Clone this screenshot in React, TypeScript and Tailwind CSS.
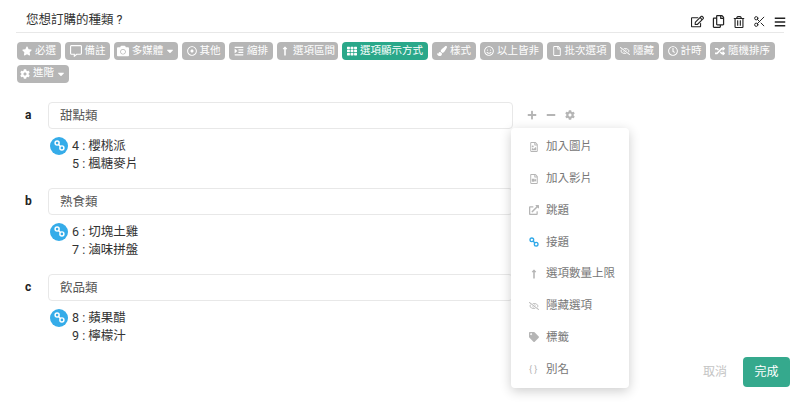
import React from "react";
import {
  FaStar, FaCamera, FaRegDotCircle, FaIndent, FaLongArrowAltUp, FaTh, FaPaintBrush, FaRegSmile, FaRegFile,
  FaRegEyeSlash, FaRegClock, FaRandom, FaCog, FaCaretDown, FaRegCommentAlt, FaPlus, FaMinus, FaRegEdit, FaRegCopy, FaRegTrashAlt,
  FaBars, FaRegFileImage, FaRegFileVideo, FaExternalLinkAlt, FaTag,
} from "react-icons/fa";
import { Scissors } from "lucide-react";

const font = "font-['Roboto','Noto_Sans_CJK_TC',sans-serif]";

function Chain({ className }: { className?: string }) {
  return (
    <svg viewBox="0 0 12 12" className={className} fill="none" stroke="currentColor" strokeWidth="1.6">
      <circle cx="3.4" cy="3.4" r="2.2" />
      <circle cx="8.6" cy="8.6" r="2.2" />
      <path d="M4.6 4.6 L7.4 7.4" />
    </svg>
  );
}

const tools: { icon: React.ReactNode; label: string; w: string; caret?: boolean; on?: boolean }[] = [
  { icon: <FaStar />, label: "必選", w: "w-[44px]" },
  { icon: <FaRegCommentAlt className="!text-[12px]" />, label: "備註", w: "w-[45px]" },
  { icon: <FaCamera className="!text-[12px]" />, label: "多媒體", w: "w-[64px]", caret: true },
  { icon: <FaRegDotCircle />, label: "其他", w: "w-[43px]" },
  { icon: <FaIndent />, label: "縮排", w: "w-[44px]" },
  { icon: <FaLongArrowAltUp />, label: "選項區間", w: "w-[61px]" },
  { icon: <FaTh />, label: "選項顯示方式", w: "w-[86px]", on: true },
  { icon: <FaPaintBrush />, label: "樣式", w: "w-[44px]" },
  { icon: <FaRegSmile />, label: "以上皆非", w: "w-[63px]" },
  { icon: <FaRegFile />, label: "批次選項", w: "w-[64px]" },
  { icon: <FaRegEyeSlash />, label: "隱藏", w: "w-[44px]" },
  { icon: <FaRegClock />, label: "計時", w: "w-[43px]" },
  { icon: <FaRandom />, label: "隨機排序", w: "w-[65px]" },
  { icon: <FaCog />, label: "進階", w: "w-[52px]", caret: true },
];

const groups = [
  { key: "a", title: "甜點類", items: ["4 : 櫻桃派", "5 : 楓糖麥片"], gap: "mb-[15px]" },
  { key: "b", title: "熟食類", items: ["6 : 切塊土雞", "7 : 滷味拼盤"], gap: "mb-[15px]" },
  { key: "c", title: "飲品類", items: ["8 : 蘋果醋", "9 : 檸檬汁"], gap: "" },
];

const menu: { icon: React.ReactNode; label: string }[] = [
  { icon: <FaRegFileImage />, label: "加入圖片" },
  { icon: <FaRegFileVideo />, label: "加入影片" },
  { icon: <FaExternalLinkAlt />, label: "跳題" },
  { icon: <Chain className="h-[10px] w-[10px] text-[#2fa8e8]" />, label: "接題" },
  { icon: <FaLongArrowAltUp />, label: "選項數量上限" },
  { icon: <FaRegEyeSlash />, label: "隱藏選項" },
  { icon: <FaTag />, label: "標籤" },
  { icon: <span className="whitespace-nowrap text-[9px] leading-none">{"{ }"}</span>, label: "別名" },
];

export default function App() {
  return (
    <div className={`relative h-[404px] w-[800px] overflow-hidden bg-white ${font}`}>
      <div className="mx-[16px] flex h-[33px] items-center justify-between border-b border-[#e8e8e8] pl-[10px]">
        <span className="mt-[8px] text-[12.5px] text-[#333]">您想訂購的種類 ?</span>
        <div className="-mr-[2px] mt-[11px] flex items-center gap-[8px] text-[13px] text-[#222]">
          <FaRegEdit className="text-[13px]" />
          <FaRegCopy className="text-[13px]" />
          <FaRegTrashAlt className="text-[12px]" />
          <Scissors className="h-[13px] w-[13px]" strokeWidth={1.8} />
          <FaBars className="text-[12px]" />
        </div>
      </div>

      <div className="mx-[17px] mt-[9px] flex flex-wrap gap-x-[4px] gap-y-[4.5px]">
        {tools.map((t) => (
          <div
            key={t.label}
            className={`flex h-[18px] items-center justify-center gap-[3px] whitespace-nowrap rounded-[4px] text-[10.5px] leading-none text-white [&_svg]:shrink-0 [&_svg]:text-[10px] ${t.w} ${t.on ? "bg-[#2aa88a]" : "bg-[#b6b6b6]"}`}
          >
            {t.icon}
            <span>{t.label}</span>
            {t.caret && <FaCaretDown className="-ml-[1px]" />}
          </div>
        ))}
      </div>

      <div className="mt-[19px] pl-[25px]">
        {groups.map((g) => (
          <div key={g.key} className={g.gap}>
            <div className="flex items-center">
              <span className="-mt-[1px] w-[23px] text-[12px] font-bold text-[#222]">{g.key}</span>
              <div className="flex h-[27px] w-[465px] items-center rounded-[4px] border border-[#e8e8e8] pl-[11px] pt-[2px] text-[12.5px] text-[#555]">
                {g.title}
              </div>
              <div className="ml-[14px] flex items-center gap-[9px] text-[10px] text-[#b5b5b5]">
                {g.key === "a" && (
                  <>
                    <FaPlus />
                    <FaMinus />
                    <FaCog />
                  </>
                )}
              </div>
            </div>
            <div className="mt-[8px] flex pl-[25px]">
              <div className="flex h-[18px] w-[18px] items-center justify-center rounded-full bg-[#35ace9] text-white">
                <Chain className="h-[11px] w-[11px]" />
              </div>
              <div className="ml-[4px] text-[12.5px] leading-[18px] text-[#333]">
                {g.items.map((i) => (
                  <div key={i}>{i}</div>
                ))}
              </div>
            </div>
          </div>
        ))}
      </div>

      <div className="absolute left-[511px] top-[128px] flex h-[260px] w-[118px] flex-col rounded-[4px] bg-white pt-[3px] shadow-[0_3px_12px_rgba(0,0,0,0.2)]">
        {menu.map((m) => (
          <div key={m.label} className="flex h-[31.75px] items-center pl-[18px] text-[11.5px] text-[#777]">
            <span className="flex w-[17px] justify-start text-[10px] text-[#b5b5b5]">{m.icon}</span>
            {m.label}
          </div>
        ))}
      </div>

      <div className="absolute right-[10px] top-[357px] flex items-center gap-[16px]">
        <span className="text-[12px] text-[#c4c4c4]">取消</span>
        <div className="flex h-[30px] w-[47px] items-center justify-center rounded-[4px] bg-[#35a98d] text-[12px] text-white">完成</div>
      </div>
    </div>
  );
}
